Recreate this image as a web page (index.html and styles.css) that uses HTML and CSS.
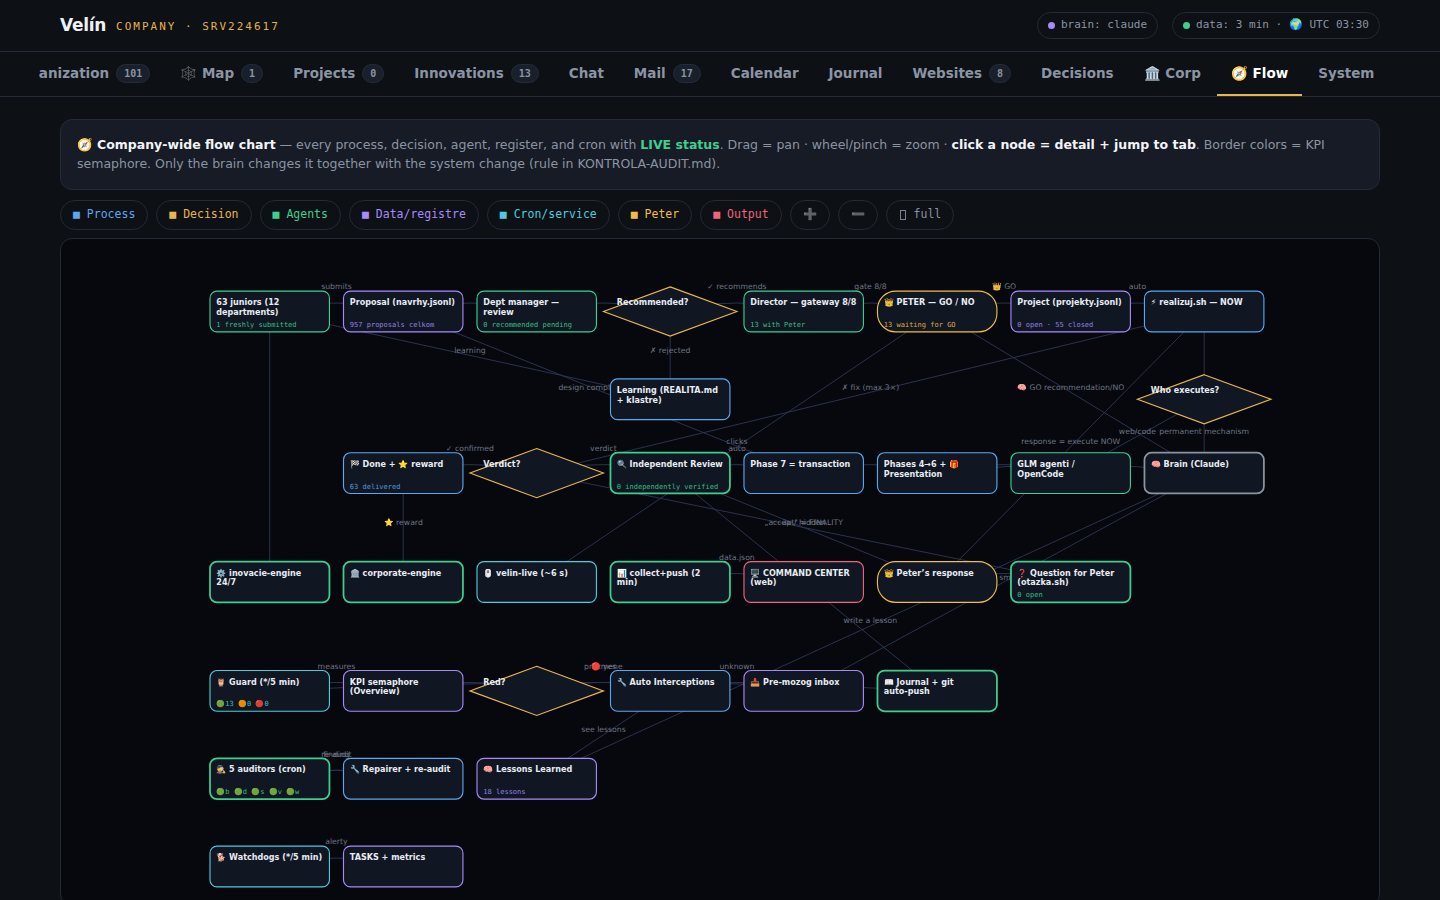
FILE: index.html
```html
<!DOCTYPE html>
<html lang="en">
<head>
    <meta charset="utf-8">
    <title>Velín</title>
    <link rel="stylesheet" href="styles.css">
</head>
<body>
    <header class="top">
        <h1>Velín</h1>
        <span class="sub">COMPANY · SRV224617</span>
        <div class="status">
            <span class="pill"><i class="dot purple"></i>brain: claude</span>
            <span class="pill"><i class="dot green"></i>data: 3 min · 🌍 UTC 03:30</span>
        </div>
    </header>

    <nav class="tabbar">
        <div class="tabs">
            <a class="tab">Organization<b>101</b></a>
            <a class="tab">🕸️ Map<b>1</b></a>
            <a class="tab">Projects<b>0</b></a>
            <a class="tab">Innovations<b>13</b></a>
            <a class="tab">Chat</a>
            <a class="tab">Mail<b>17</b></a>
            <a class="tab">Calendar</a>
            <a class="tab">Journal</a>
            <a class="tab">Websites<b>8</b></a>
            <a class="tab">Decisions</a>
            <a class="tab">🏛️ Corp</a>
            <a class="tab active">🧭 Flow</a>
            <a class="tab">System</a>
        </div>
    </nav>

    <main>
        <div class="card">
            🧭 <strong>Company-wide flow chart</strong> — every process, decision, agent, register, and cron with <strong class="live">LIVE status</strong>. Drag = pan · wheel/pinch = zoom · <strong>click a node = detail + jump to tab</strong>. Border colors = KPI semaphore. Only the brain changes it together with the system change (rule in KONTROLA-AUDIT.md).
        </div>

        <div class="legend">
            <span class="chip c-process">■ Process</span>
            <span class="chip c-decision">■ Decision</span>
            <span class="chip c-agent">■ Agents</span>
            <span class="chip c-data">■ Data/registre</span>
            <span class="chip c-cron">■ Cron/service</span>
            <span class="chip c-peter">■ Peter</span>
            <span class="chip c-output">■ Output</span>
            <button class="chip">➕</button>
            <button class="chip">➖</button>
            <button class="chip"><i class="box"></i> full</button>
        </div>

        <div class="flow">
            <svg class="chart" id="chart">
                <g id="view" transform="translate(149 52.1) scale(.7026)"></g>
            </svg>
        </div>
    </main>

    <script src="flow.js"></script>
</body>
</html>
```

FILE: styles.css
```css
* { box-sizing: border-box; }
body {
    margin: 0;
    height: 900px;
    overflow: hidden;
    background: #0d1014;
    color: #8b94a3;
    font-family: "DejaVu Sans", sans-serif;
    font-size: 13px;
}

.top { height: 52px; padding: 0 60px; display: flex; align-items: center; border-bottom: 1px solid #232a38; }
.top h1 { margin: 0 10px 2px 0; font-size: 17px; letter-spacing: -.3px; color: #eef1f6; }
.sub { font-family: "DejaVu Sans Mono", monospace; font-size: 11px; letter-spacing: 2px; color: #e3b34f; padding-top: 2px; }
.status { display: flex; gap: 14px; margin-left: auto; }
.pill {
    display: flex; align-items: center; height: 27px; padding: 0 10px 2px;
    border: 1px solid #232a38; border-radius: 14px;
    font-family: "DejaVu Sans Mono", monospace; font-size: 11px;
}
.dot { width: 7px; height: 7px; border-radius: 50%; margin: 2px 6px 0 0; }
.purple { background: #a78bfa; }
.green { background: #3ecf8e; }

.tabbar { height: 45px; border-bottom: 1px solid #232a38; }
.tabs { display: flex; justify-content: flex-end; gap: 2px; height: 44px; margin: 0 51.6px 0 39px; overflow: hidden; }
.tab {
    flex: none; display: flex; align-items: center; padding: 0 14px; white-space: pre;
    font-size: 13.5px; font-weight: 600; border-bottom: 2px solid transparent;
}
.tab b {
    margin-left: 7px; padding: 0 7px; height: 19px; line-height: 17px;
    background: #19202c; border: 1px solid #232c3b; border-radius: 10px;
    font-family: "DejaVu Sans Mono", monospace; font-size: 10px;
}
.tab.active { color: #fff; border-bottom-color: #e8b650; }

main { padding: 22px 60px 0; }
.card {
    height: 71px; padding: 15px 16px; line-height: 19px; font-size: 12.5px;
    background: #161b25; border: 1px solid #232c3b; border-radius: 12px;
}
.card strong { color: #f2f4f8; }
.card .live { color: #3ecf8e; }

.legend { display: flex; gap: 8px; margin: 10px 0 8px; }
.chip {
    height: 30px; padding: 0 12px 2px; display: flex; align-items: center;
    background: none; border: 1px solid #232a38; border-radius: 15px;
    color: #8b94a3; font-family: "DejaVu Sans Mono", monospace; font-size: 11.5px; white-space: pre;
}
.box { width: 6px; height: 10px; margin: 2px 1px 0; border: 1px solid #79818f; }
.c-process { color: #5ba8ee; }
.c-decision { color: #e8b650; }
.c-agent { color: #3ecf8e; }
.c-data { color: #a78bfa; }
.c-cron { color: #4fcbdc; }
.c-peter { color: #f0bd48; }
.c-output { color: #f0637c; }

.flow { height: 668px; background: #06080d; border: 1px solid #232a38; border-radius: 12px; overflow: hidden; }
.chart { display: block; width: 100%; height: 100%; }
.edge { fill: none; stroke: #2b3350; stroke-width: 1.4; }
.edge-label { font-size: 11px; fill: #6c7484; text-anchor: middle; }
.shape { fill: #101722; stroke: currentColor; stroke-width: 1.6; }
.ok .shape { stroke: #3ecf8e; stroke-width: 2.5; }
.idle .shape { stroke: #8b94a3; stroke-width: 2.5; }
.title { font-size: 11.5px; font-weight: 700; fill: #e8ecf3; }
.live-text { font-family: "DejaVu Sans Mono", monospace; font-size: 10px; fill: currentColor; opacity: .9; }
```

FILE: flow.js
```js
const W = 170, H = 58, COL = 190;
const ROWS = [0, 125, 230, 385, 540, 665, 790];

// id: [column, row, type, title lines, live text, kpi state]
const nodes = {
    juniors: [0, 0, 'agent', ['63 juniors (12', 'departments)'], '1 freshly submitted'],
    proposal: [1, 0, 'data', ['Proposal (navrhy.jsonl)'], '957 proposals celkom'],
    dept: [2, 0, 'agent', ['Dept manager —', 'review'], '0 recommended pending'],
    recommended: [3, 0, 'decision', ['Recommended?']],
    director: [4, 0, 'agent', ['Director — gateway 8/8'], '13 with Peter'],
    peter: [5, 0, 'peter', ['👑 PETER — GO / NO'], '13 waiting for GO'],
    project: [6, 0, 'data', ['Project (projekty.jsonl)'], '0 open · 55 closed'],
    realizuj: [7, 0, 'process', ['⚡ realizuj.sh — NOW']],
    learning: [3, 1, 'process', ['Learning (REALITA.md', '+ klastre)']],
    who: [7, 1, 'decision', ['Who executes?']],
    done: [1, 2, 'process', ['🏁 Done + ⭐ reward'], '63 delivered'],
    verdict: [2, 2, 'decision', ['Verdict?']],
    review: [3, 2, 'agent', ['🔍 Independent Review'], '0 independently verified', 'ok'],
    phase7: [4, 2, 'process', ['Phase 7 = transaction']],
    phases: [5, 2, 'process', ['Phases 4→6 + 🎁', 'Presentation']],
    glm: [6, 2, 'agent', ['GLM agenti /', 'OpenCode']],
    brain: [7, 2, 'agent', ['🧠 Brain (Claude)'], '', 'idle'],
    inovacie: [0, 3, 'cron', ['⚙️ inovacie-engine', '24/7'], '', 'ok'],
    corporate: [1, 3, 'cron', ['🏛️ corporate-engine'], '', 'ok'],
    velin: [2, 3, 'cron', ['🖱️ velin-live (~6 s)']],
    collect: [3, 3, 'cron', ['📊 collect+push (2', 'min)'], '', 'ok'],
    command: [4, 3, 'output', ['🖥️ COMMAND CENTER', '(web)']],
    response: [5, 3, 'peter', ['👑 Peter’s response']],
    question: [6, 3, 'agent', ['❓ Question for Peter', '(otazka.sh)'], '0 open', 'ok'],
    guard: [0, 4, 'cron', ['🦉 Guard (*/5 min)'], '🟢13 🟠0 🔴0'],
    kpi: [1, 4, 'data', ['KPI semaphore', '(Overview)']],
    red: [2, 4, 'decision', ['Red?']],
    auto: [3, 4, 'process', ['🔧 Auto Interceptions']],
    inbox: [4, 4, 'data', ['📥 Pre-mozog inbox']],
    journal: [5, 4, 'data', ['📖 Journal + git', 'auto-push'], '', 'ok'],
    auditors: [0, 5, 'agent', ['🕵️ 5 auditors (cron)'], '🟢b 🟢d 🟢s 🟢v 🟢w', 'ok'],
    repairer: [1, 5, 'process', ['🔧 Repairer + re-audit']],
    lessons: [2, 5, 'data', ['🧠 Lessons Learned'], '18 lessons'],
    watchdogs: [0, 6, 'cron', ['🐕 Watchdogs (*/5 min)']],
    tasks: [1, 6, 'data', ['TASKS + metrics']]
};

const edges = [
    ['juniors', 'proposal', 'submits'],
    ['proposal', 'dept'],
    ['dept', 'recommended'],
    ['recommended', 'director', '✓ recommends'],
    ['recommended', 'learning', '✗ rejected'],
    ['learning', 'juniors', 'learning'],
    ['director', 'peter', 'gate 8/8'],
    ['peter', 'project', '👑 GO'],
    ['peter', 'brain', '🧠 GO recommendation/NO'],
    ['peter', 'velin', 'clicks'],
    ['project', 'realizuj', 'auto'],
    ['realizuj', 'who'],
    ['who', 'glm', 'web/code'],
    ['who', 'brain', 'permanent mechanism'],
    ['glm', 'phases'],
    ['brain', 'phases'],
    ['phases', 'phase7'],
    ['phase7', 'review', 'auto'],
    ['phase7', 'proposal', 'design complete (auto)'],
    ['review', 'verdict', 'verdict'],
    ['verdict', 'done', '✓ confirmed'],
    ['verdict', 'realizuj', '✗ fix (max 3×)'],
    ['verdict', 'question', '3x / hidden'],
    ['review', 'response', '„accept" = FINALITY'],
    ['review', 'journal'],
    ['response', 'realizuj', 'response = execute NOW'],
    ['response', 'question'],
    ['done', 'corporate', '⭐ reward'],
    ['inovacie', 'juniors'],
    ['collect', 'command', 'data.json'],
    ['guard', 'kpi', 'measures'],
    ['guard', 'journal', 'pri zmene'],
    ['kpi', 'red'],
    ['red', 'auto', '🔴 yes'],
    ['auto', 'inbox', 'unknown'],
    ['auto', 'lessons', 'see lessons'],
    ['inbox', 'brain', 'for smart'],
    ['brain', 'lessons', 'write a lesson'],
    ['auditors', 'repairer', 'finding'],
    ['repairer', 'auditors', 're-audit'],
    ['watchdogs', 'tasks', 'alerty']
];

const view = document.getElementById('view');

function add(parent, tag, attrs, text) {
    const el = document.createElementNS('http://www.w3.org/2000/svg', tag);
    for (const k in attrs) el.setAttribute(k, attrs[k]);
    if (text) el.textContent = text;
    parent.appendChild(el);
    return el;
}

function center(id) {
    const n = nodes[id];
    return [n[0] * COL + W / 2, ROWS[n[1]] + H / 2];
}

edges.forEach(([from, to, label]) => {
    const [x1, y1] = center(from);
    const [x2, y2] = center(to);
    const mx = (x1 + x2) / 2;
    // edges inside one row bow upwards a bit
    const my = (y1 + y2) / 2 - (y1 === y2 ? 24 : 0);
    add(view, 'path', { class: 'edge', d: `M${x1} ${y1} Q${mx} ${my} ${x2} ${y2}` });
    if (label) add(view, 'text', { class: 'edge-label', x: mx, y: my - (y1 === y2 ? 7.5 : 3.5) }, label);
});

Object.values(nodes).forEach(([col, row, type, title, live, state]) => {
    const g = add(view, 'g', {
        class: `node c-${type} ${state || ''}`,
        transform: `translate(${col * COL} ${ROWS[row]})`
    });
    if (type === 'decision') {
        add(g, 'polygon', { class: 'shape', points: `${W / 2},-6 ${W + 10},${H / 2} ${W / 2},${H + 6} -10,${H / 2}` });
    } else {
        add(g, 'rect', { class: 'shape', width: W, height: H, rx: type === 'peter' ? 26 : 10 });
    }
    title.forEach((line, i) => add(g, 'text', { class: 'title', x: 9, y: 20 + i * 14 }, line));
    if (live) add(g, 'text', { class: 'live-text', x: 9, y: 51 }, live);
});
```
